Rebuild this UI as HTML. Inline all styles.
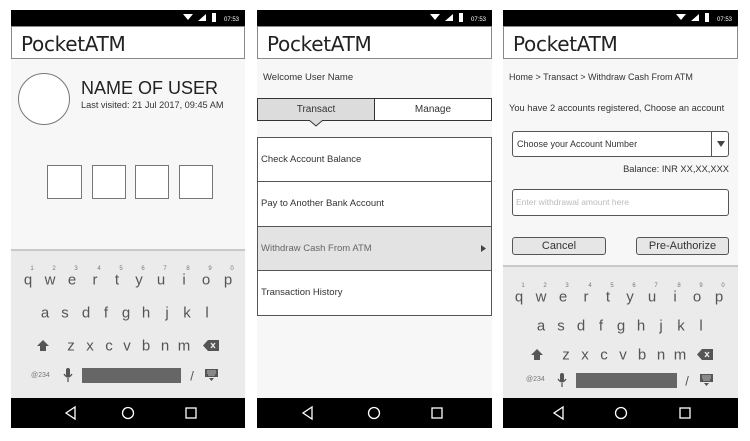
<!DOCTYPE html>
<html><head><meta charset="utf-8"><style>
*{margin:0;padding:0;box-sizing:border-box}
body{width:750px;height:441px;background:#fff;position:relative;overflow:hidden;font-family:"Liberation Sans",Arial,sans-serif;color:#333}
.a{position:absolute}
.scr{position:absolute;top:10px;height:418px;background:#f7f7f7;overflow:hidden}
.sb{position:absolute;left:0;right:0;top:0;height:16px;background:#000}
.tb{position:absolute;left:0;right:0;top:16px;height:33px;background:#fff;border:1px solid #888;font-size:20px;color:#222;padding:5px 0 0 9px;font-family:"DejaVu Sans","Liberation Sans",sans-serif;letter-spacing:-0.3px}
.nav{position:absolute;left:0;right:0;bottom:0;height:30px;background:#000}
.kb{position:absolute;left:0;right:0;background:#ebebeb;border-top:2px solid #c8c8c8}
.k{position:absolute;transform:translate(-50%,-50%);font-size:15px;color:#555;line-height:1}
.n{position:absolute;transform:translate(-50%,-50%);font-size:6px;color:#777;line-height:1}
</style></head><body>

<!-- Screen 1 -->
<div class="scr" style="left:11px;width:234px">
  <div class="sb"><svg class="a" style="right:0;top:0" width="80" height="16"><polygon points="18,4 28,4 23,10" fill="#fff"/><polygon points="33,11 41,4 41,11" fill="#fff"/><rect x="47" y="3" width="4" height="9" fill="#fff"/><text x="59" y="11" font-size="6" fill="#fff" font-family="Liberation Sans">07:53</text></svg></div>
  <div class="tb">PocketATM</div>
  <div class="a" style="left:7px;top:63px;width:52px;height:52px;border:1px solid #777;border-radius:50%;background:#fff"></div>
  <div class="a" style="left:70px;top:68px;font-size:18px;color:#222">NAME OF USER</div>
  <div class="a" style="left:70px;top:90px;font-size:9.2px;color:#333">Last visited: 21 Jul 2017, 09:45 AM</div>
  <div class="a" style="left:36px;top:155px;width:35px;height:34px;border:1px solid #777;background:#fff"></div>
  <div class="a" style="left:81px;top:155px;width:34px;height:34px;border:1px solid #777;background:#fff"></div>
  <div class="a" style="left:124px;top:155px;width:34px;height:34px;border:1px solid #777;background:#fff"></div>
  <div class="a" style="left:168px;top:155px;width:34px;height:34px;border:1px solid #777;background:#fff"></div>
  <div class="kb" style="top:239px;height:150px">
    <span class="n" style="left:21px;top:18px">1</span><span class="n" style="left:43px;top:18px">2</span><span class="n" style="left:65px;top:18px">3</span><span class="n" style="left:88px;top:18px">4</span><span class="n" style="left:110px;top:18px">5</span><span class="n" style="left:132px;top:18px">6</span><span class="n" style="left:154px;top:18px">7</span><span class="n" style="left:177px;top:18px">8</span><span class="n" style="left:199px;top:18px">9</span><span class="n" style="left:221px;top:18px">0</span>
    <span class="k" style="left:17px;top:29px">q</span><span class="k" style="left:39px;top:29px">w</span><span class="k" style="left:61px;top:29px">e</span><span class="k" style="left:84px;top:29px">r</span><span class="k" style="left:106px;top:29px">t</span><span class="k" style="left:128px;top:29px">y</span><span class="k" style="left:150px;top:29px">u</span><span class="k" style="left:173px;top:29px">i</span><span class="k" style="left:195px;top:29px">o</span><span class="k" style="left:217px;top:29px">p</span>
    <span class="k" style="left:34px;top:62px">a</span><span class="k" style="left:54px;top:62px">s</span><span class="k" style="left:75px;top:62px">d</span><span class="k" style="left:95px;top:62px">f</span><span class="k" style="left:115px;top:62px">g</span><span class="k" style="left:135px;top:62px">h</span><span class="k" style="left:156px;top:62px">j</span><span class="k" style="left:176px;top:62px">k</span><span class="k" style="left:196px;top:62px">l</span>
    <svg class="a" style="left:26px;top:89px" width="12" height="12"><polygon points="6,0 12,6 9,6 9,11 3,11 3,6 0,6" fill="#555"/></svg>
    <span class="k" style="left:60px;top:95px">z</span><span class="k" style="left:79px;top:95px">x</span><span class="k" style="left:98px;top:95px">c</span><span class="k" style="left:116px;top:95px">v</span><span class="k" style="left:135px;top:95px">b</span><span class="k" style="left:154px;top:95px">n</span><span class="k" style="left:173px;top:95px">m</span>
    <svg class="a" style="left:192px;top:89px" width="16" height="11"><polygon points="0,5.5 5,0 16,0 16,11 5,11" fill="#555"/><path d="M8 3 L12 8 M12 3 L8 8" stroke="#eee" stroke-width="1.3"/></svg>
    <span class="a" style="left:20px;top:121px;font-size:7px;color:#777">@234</span>
    <svg class="a" style="left:52px;top:117px" width="10" height="15"><rect x="3" y="0" width="4" height="9" rx="2" fill="#555"/><path d="M1 6 Q5 12 9 6 M5 10 V14" stroke="#555" fill="none" stroke-width="1.3"/></svg>
    <div class="a" style="left:71px;top:117px;width:99px;height:15px;background:#666"></div>
    <span class="k" style="left:181px;top:125px;font-size:13px">/</span>
    <svg class="a" style="left:194px;top:118px" width="13" height="12"><rect x="0" y="0" width="13" height="8" fill="#555"/><path d="M2 2h9M2 4h9M3 6h7" stroke="#ddd" stroke-width=".8"/><polygon points="4,9 9,9 6.5,12" fill="#555"/></svg>
  </div>
  <div class="nav"><svg width="234" height="30"><polygon points="55,15 64,9 64,21" fill="none" stroke="#fff" stroke-width="1.3"/><circle cx="117" cy="15" r="5.5" fill="none" stroke="#fff" stroke-width="1.3"/><rect x="175" y="10" width="10" height="10" fill="none" stroke="#fff" stroke-width="1.3"/></svg></div>
</div>

<!-- Screen 2 -->
<div class="scr" style="left:257px;width:235px">
  <div class="sb"><svg class="a" style="right:0;top:0" width="80" height="16"><polygon points="18,4 28,4 23,10" fill="#fff"/><polygon points="33,11 41,4 41,11" fill="#fff"/><rect x="47" y="3" width="4" height="9" fill="#fff"/><text x="59" y="11" font-size="6" fill="#fff" font-family="Liberation Sans">07:53</text></svg></div>
  <div class="tb">PocketATM</div>
  <div class="a" style="left:6px;top:62px;font-size:9.5px;color:#333">Welcome User Name</div>
  <div class="a" style="left:0;top:88px;width:235px;height:23px;border:1px solid #333;background:#fff"></div>
  <div class="a" style="left:0;top:88px;width:118px;height:23px;border:1px solid #333;background:#dcdcdc;font-size:10px;text-align:center;line-height:21px">Transact</div>
  <div class="a" style="left:117px;top:88px;width:118px;height:23px;border:1px solid #333;font-size:10px;text-align:center;line-height:21px">Manage</div>
  <svg class="a" style="left:52px;top:110px" width="14" height="7"><polygon points="0,0 14,0 7,6" fill="#dcdcdc" stroke="#333"/><rect x="1" y="-1" width="12" height="1.5" fill="#dcdcdc"/></svg>
  <div class="a" style="left:0;top:127px;width:235px;height:179px;border:1px solid #555;background:#fff"></div>
  <div class="a" style="left:0;top:171px;width:235px;border-top:1px solid #555"></div>
  <div class="a" style="left:0;top:216px;width:235px;height:45px;background:#e3e3e3;border:1px solid #555"></div>
  <div class="a" style="left:4px;top:144px;font-size:9.5px">Check Account Balance</div>
  <div class="a" style="left:4px;top:188px;font-size:9.5px">Pay to Another Bank Account</div>
  <div class="a" style="left:4px;top:233px;font-size:9.5px;color:#666">Withdraw Cash From ATM</div>
  <svg class="a" style="left:224px;top:235px" width="6" height="7"><polygon points="0,0 5,3.5 0,7" fill="#444"/></svg>
  <div class="a" style="left:4px;top:277px;font-size:9.5px">Transaction History</div>
  <div class="nav"><svg width="235" height="30"><polygon points="46,15 55,9 55,21" fill="none" stroke="#fff" stroke-width="1.3"/><circle cx="117" cy="15" r="5.5" fill="none" stroke="#fff" stroke-width="1.3"/><rect x="175" y="10" width="10" height="10" fill="none" stroke="#fff" stroke-width="1.3"/></svg></div>
</div>

<!-- Screen 3 -->
<div class="scr" style="left:503px;width:235px">
  <div class="sb"><svg class="a" style="right:0;top:0" width="80" height="16"><polygon points="18,4 28,4 23,10" fill="#fff"/><polygon points="33,11 41,4 41,11" fill="#fff"/><rect x="47" y="3" width="4" height="9" fill="#fff"/><text x="59" y="11" font-size="6" fill="#fff" font-family="Liberation Sans">07:53</text></svg></div>
  <div class="tb">PocketATM</div>
  <div class="a" style="left:6px;top:62px;font-size:9px;color:#333">Home &gt; Transact &gt; Withdraw Cash From ATM</div>
  <div class="a" style="left:6px;top:93px;font-size:9.3px;color:#333">You have 2 accounts registered, Choose an account</div>
  <div class="a" style="left:9px;top:121px;width:217px;height:26px;border:1px solid #555;border-radius:3px;background:#fff;font-size:9px;line-height:24px;padding-left:4px">Choose your Account Number</div>
  <div class="a" style="left:208px;top:121px;width:1px;height:26px;background:#555"></div>
  <svg class="a" style="left:214px;top:131px" width="8" height="6"><polygon points="0,0 8,0 4,6" fill="#444"/></svg>
  <div class="a" style="right:9px;top:154px;font-size:9.3px;color:#333">Balance: INR XX,XX,XXX</div>
  <div class="a" style="left:9px;top:179px;width:217px;height:27px;border:1px solid #555;border-radius:3px;background:#fff;font-size:8.5px;line-height:25px;padding-left:3px;color:#bbb">Enter withdrawal amount here</div>
  <div class="a" style="left:9px;top:227px;width:94px;height:18px;border:1px solid #555;border-radius:3px;background:#e6e6e6;font-size:11px;text-align:center;line-height:16px">Cancel</div>
  <div class="a" style="left:133px;top:227px;width:93px;height:18px;border:1px solid #555;border-radius:3px;background:#e6e6e6;font-size:11px;text-align:center;line-height:16px">Pre-Authorize</div>
  <div class="kb" style="top:255px;height:134px">
    <span class="n" style="left:20px;top:19px">1</span><span class="n" style="left:42px;top:19px">2</span><span class="n" style="left:64px;top:19px">3</span><span class="n" style="left:87px;top:19px">4</span><span class="n" style="left:109px;top:19px">5</span><span class="n" style="left:131px;top:19px">6</span><span class="n" style="left:153px;top:19px">7</span><span class="n" style="left:176px;top:19px">8</span><span class="n" style="left:198px;top:19px">9</span><span class="n" style="left:220px;top:19px">0</span>
    <span class="k" style="left:16px;top:30px">q</span><span class="k" style="left:38px;top:30px">w</span><span class="k" style="left:60px;top:30px">e</span><span class="k" style="left:83px;top:30px">r</span><span class="k" style="left:105px;top:30px">t</span><span class="k" style="left:127px;top:30px">y</span><span class="k" style="left:149px;top:30px">u</span><span class="k" style="left:172px;top:30px">i</span><span class="k" style="left:194px;top:30px">o</span><span class="k" style="left:216px;top:30px">p</span>
    <span class="k" style="left:38px;top:59px">a</span><span class="k" style="left:58px;top:59px">s</span><span class="k" style="left:78px;top:59px">d</span><span class="k" style="left:98px;top:59px">f</span><span class="k" style="left:118px;top:59px">g</span><span class="k" style="left:138px;top:59px">h</span><span class="k" style="left:158px;top:59px">j</span><span class="k" style="left:178px;top:59px">k</span><span class="k" style="left:198px;top:59px">l</span>
    <svg class="a" style="left:28px;top:82px" width="12" height="12"><polygon points="6,0 12,6 9,6 9,11 3,11 3,6 0,6" fill="#555"/></svg>
    <span class="k" style="left:63px;top:88px">z</span><span class="k" style="left:82px;top:88px">x</span><span class="k" style="left:101px;top:88px">c</span><span class="k" style="left:120px;top:88px">v</span><span class="k" style="left:139px;top:88px">b</span><span class="k" style="left:158px;top:88px">n</span><span class="k" style="left:177px;top:88px">m</span>
    <svg class="a" style="left:194px;top:82px" width="16" height="11"><polygon points="0,5.5 5,0 16,0 16,11 5,11" fill="#555"/><path d="M8 3 L12 8 M12 3 L8 8" stroke="#eee" stroke-width="1.3"/></svg>
    <span class="a" style="left:23px;top:109px;font-size:7px;color:#777">@234</span>
    <svg class="a" style="left:54px;top:106px" width="10" height="15"><rect x="3" y="0" width="4" height="9" rx="2" fill="#555"/><path d="M1 6 Q5 12 9 6 M5 10 V14" stroke="#555" fill="none" stroke-width="1.3"/></svg>
    <div class="a" style="left:73px;top:106px;width:101px;height:15px;background:#666"></div>
    <span class="k" style="left:184px;top:114px;font-size:13px">/</span>
    <svg class="a" style="left:197px;top:107px" width="13" height="12"><rect x="0" y="0" width="13" height="8" fill="#555"/><path d="M2 2h9M2 4h9M3 6h7" stroke="#ddd" stroke-width=".8"/><polygon points="4,9 9,9 6.5,12" fill="#555"/></svg>
  </div>
  <div class="nav"><svg width="235" height="30"><polygon points="51,15 60,9 60,21" fill="none" stroke="#fff" stroke-width="1.3"/><circle cx="118" cy="15" r="5.5" fill="none" stroke="#fff" stroke-width="1.3"/><rect x="177" y="10" width="10" height="10" fill="none" stroke="#fff" stroke-width="1.3"/></svg></div>
</div>
</body></html>
